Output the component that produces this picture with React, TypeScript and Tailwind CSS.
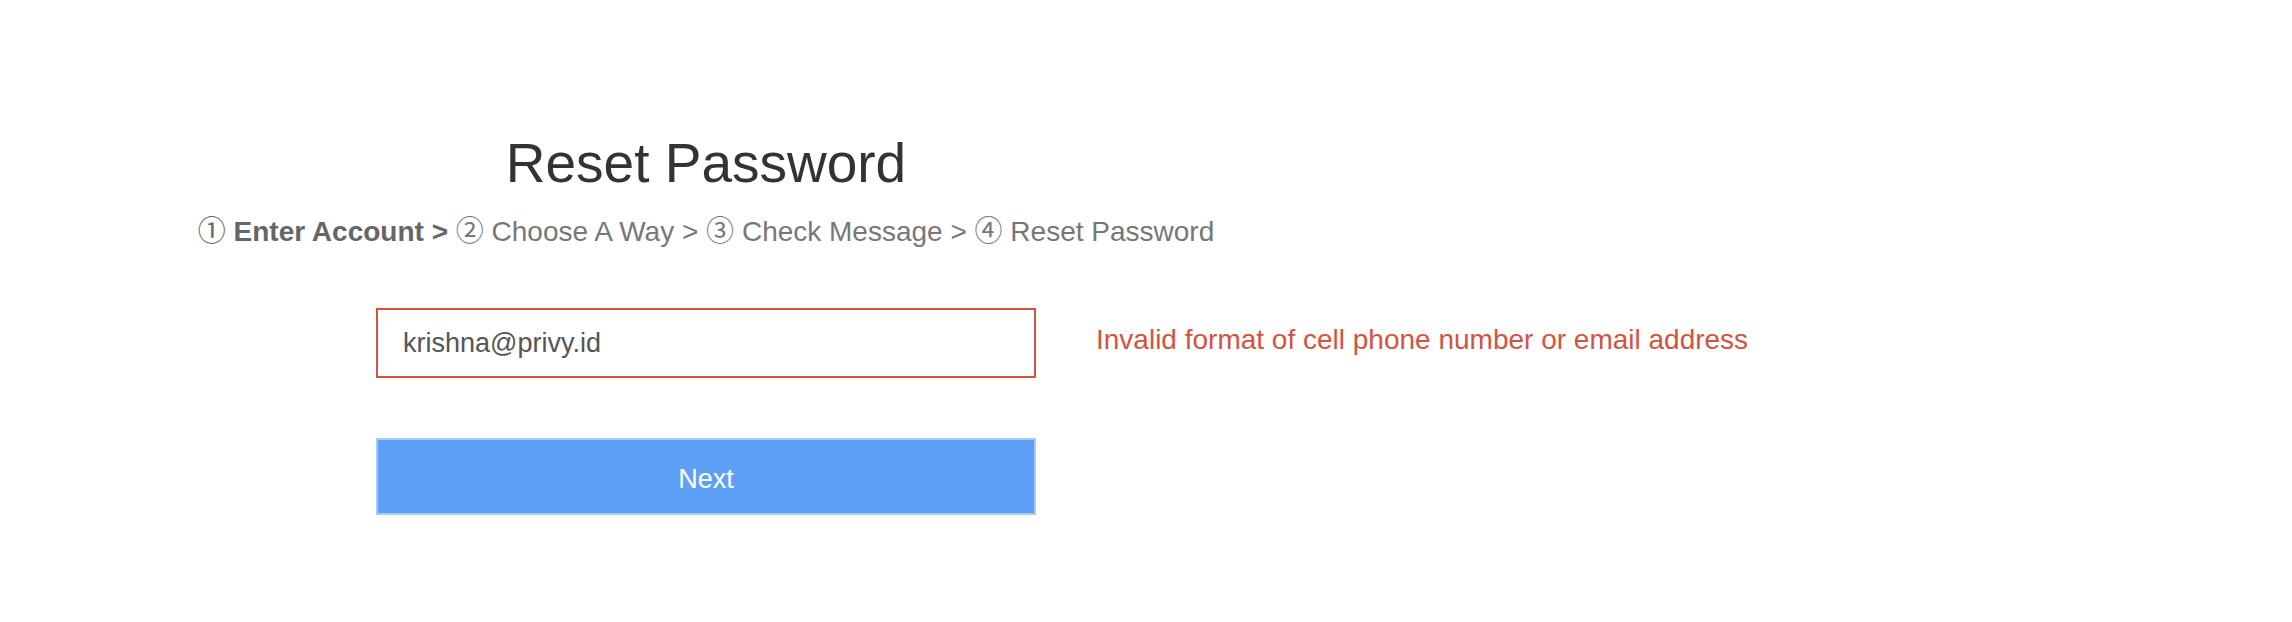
import { useState } from "react";

const circled = "font-['Noto_Sans_CJK_SC',sans-serif] font-normal";

export default function App() {
  const [account, setAccount] = useState("krishna@privy.id");

  return (
    <div className="min-h-[622px] bg-white font-['Liberation_Sans','DejaVu_Sans',sans-serif]">
      <div className="flex w-[1412px] flex-col items-center pt-[136px]">
        <h1 className="text-[55px] leading-none font-normal text-[#333333]">Reset Password</h1>

        {/* steps */}
        <div className="mt-[24px] h-[28px] overflow-visible text-[28px] leading-none whitespace-nowrap text-[#777777]">
          <span className="font-bold text-[#666666]">
            <span className={circled}>①</span> Enter Account &gt;
          </span>{" "}
          <span className={circled}>②</span> Choose A Way &gt; <span className={circled}>③</span> Check
          Message &gt; <span className={circled}>④</span> Reset Password
        </div>

        <form className="mt-[65px] flex flex-col" onSubmit={(e) => e.preventDefault()}>
          <div className="relative">
            <input
              type="text"
              value={account}
              onChange={(e) => setAccount(e.target.value)}
              className="h-[70px] w-[660px] border-2 border-[#d4533f] bg-white px-[25px] text-[27px] text-[#555555] outline-none"
            />
            <span className="absolute top-1/2 left-full ml-[60px] -translate-y-[62%] whitespace-nowrap text-[28px] leading-none text-[#d4533f]">
              Invalid format of cell phone number or email address
            </span>
          </div>

          <button
            type="submit"
            className="mt-[60px] h-[77px] w-[660px] border-2 border-[#a9c9f3] bg-[#5e9ff7] pt-[6px] text-[27px] leading-none text-white"
          >
            Next
          </button>
        </form>
      </div>
    </div>
  );
}
